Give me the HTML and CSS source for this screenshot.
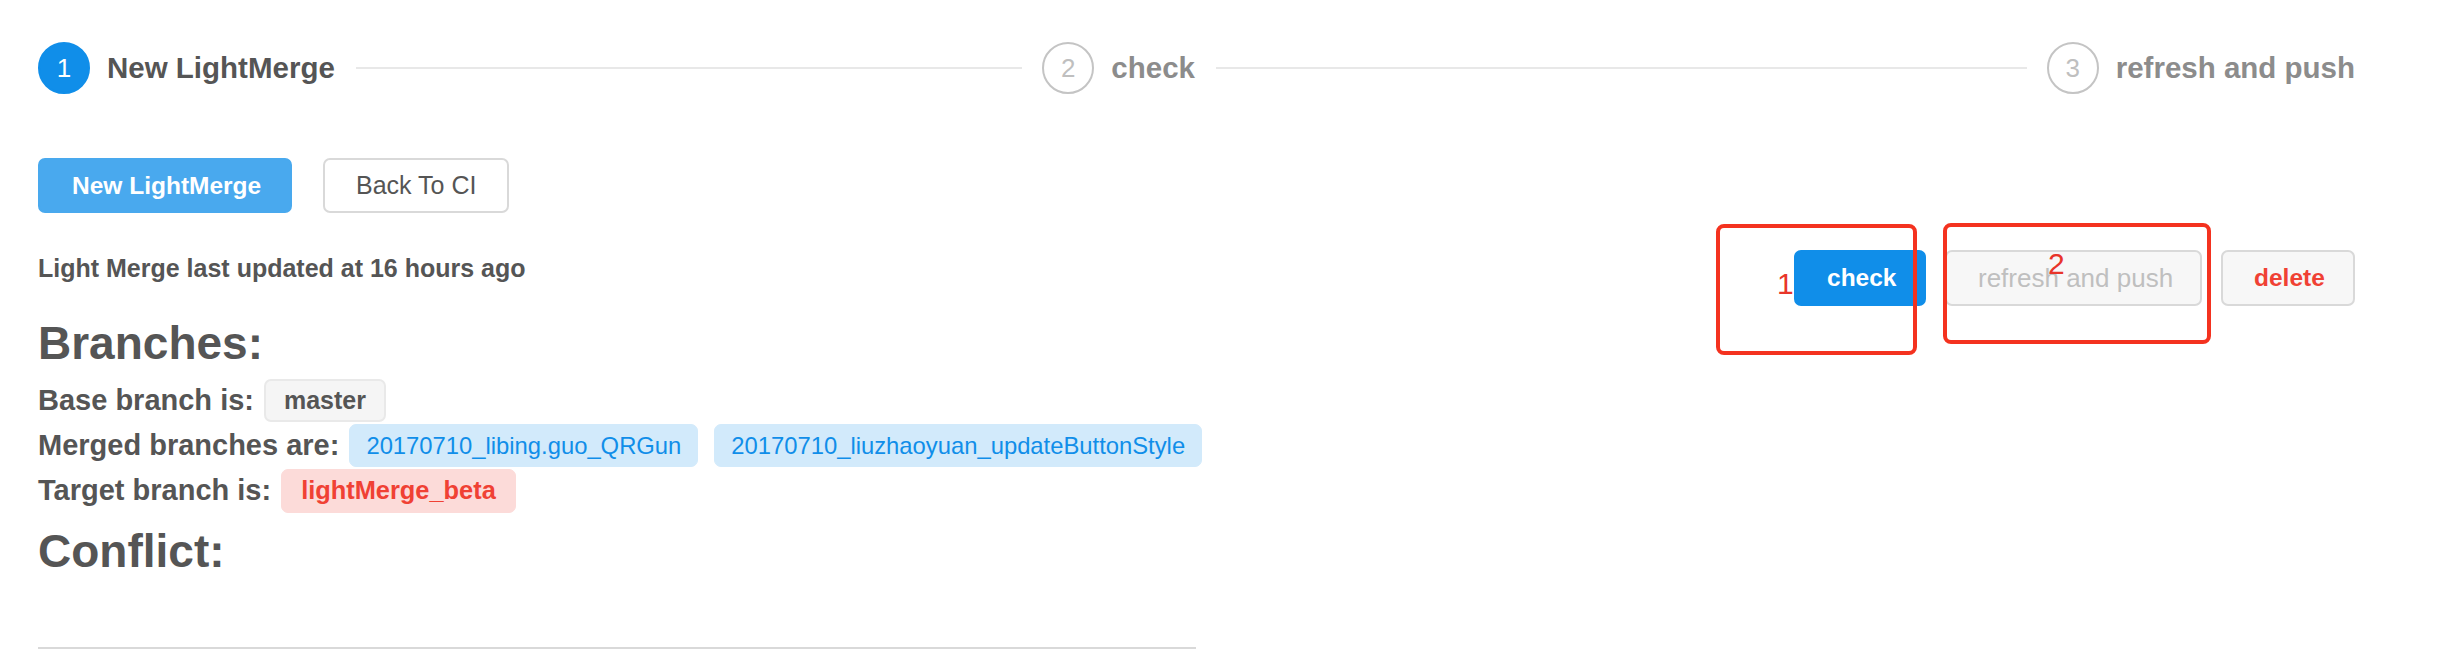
FILE: index.html
```html
<!DOCTYPE html>
<html>
<head>
<meta charset="utf-8">
<link rel="stylesheet" href="styles.css">
</head>
<body>
<div class="page">
  <div class="steps">
    <div class="step step-active">
      <span class="step-icon">1</span>
      <span class="step-title">New LightMerge</span>
      <span class="step-tail"></span>
    </div>
    <div class="step">
      <span class="step-icon">2</span>
      <span class="step-title">check</span>
      <span class="step-tail"></span>
    </div>
    <div class="step step-last">
      <span class="step-icon">3</span>
      <span class="step-title">refresh and push</span>
    </div>
  </div>

  <div class="toolbar">
    <button class="btn btn-primary-light">New LightMerge</button>
    <button class="btn btn-default">Back To CI</button>
  </div>

  <div class="info-row">
    <div class="info-col">
      <div class="updated">Light Merge last updated at 16 hours ago</div>
      <h2 class="heading">Branches:</h2>
      <div class="branch-row">
        <span class="label">Base branch is:</span>
        <span class="tag tag-gray">master</span>
      </div>
      <div class="branch-row">
        <span class="label">Merged branches are:</span>
        <span class="tag tag-blue">20170710_libing.guo_QRGun</span>
        <span class="tag tag-blue">20170710_liuzhaoyuan_updateButtonStyle</span>
      </div>
      <div class="branch-row">
        <span class="label">Target branch is:</span>
        <span class="tag tag-red">lightMerge_beta</span>
      </div>
      <h2 class="heading heading-conflict">Conflict:</h2>
      <div class="divider"></div>
    </div>
    <div class="actions">
      <button class="btn btn-primary">check</button>
      <button class="btn btn-disabled">refresh and push</button>
      <button class="btn btn-danger">delete</button>
    </div>
  </div>

  <div class="mark mark-1"></div>
  <div class="mark mark-2"></div>
  <span class="mark-num mark-num-1">1</span>
  <span class="mark-num mark-num-2">2</span>
</div>
</body>
</html>
```

FILE: styles.css
```css
* { box-sizing: border-box; }
html, body { margin: 0; padding: 0; background: #fff; }
body {
  font-family: "Liberation Sans", Arial, sans-serif;
  color: #595959;
}
.page {
  position: relative;
  width: 2438px;
  height: 664px;
  padding: 42px 83px 0 38px;
  overflow: hidden;
}

/* steps */
.steps { display: flex; align-items: center; height: 52px; }
.step { flex: 1; display: flex; align-items: center; min-width: 0; }
.step-last { flex: none; }
.step-icon {
  flex: none;
  width: 52px; height: 52px;
  border-radius: 50%;
  border: 2px solid #c4c4c4;
  color: #bfbfbf;
  font-size: 26px;
  line-height: 48px;
  text-align: center;
  margin-right: 17px;
}
.step-active .step-icon { background: #108ee9; border-color: #108ee9; color: #fff; }
.step-title {
  flex: none;
  font-size: 29.5px;
  font-weight: bold;
  color: #8c8c8c;
  line-height: 52px;
  white-space: nowrap;
}
.step-active .step-title { color: #555; }
.step-tail {
  flex: 1;
  height: 2px;
  background: #e8e8e8;
  margin: 0 20px 0 21px;
}

/* buttons */
.toolbar { display: flex; gap: 31px; margin-top: 64px; }
.btn {
  font-family: "Liberation Sans", Arial, sans-serif;
  font-size: 24.5px;
  font-weight: bold;
  height: 55px;
  padding: 0 31px;
  border-radius: 7px;
  border: 2px solid #d9d9d9;
  background: #fff;
  color: #555;
  line-height: 51px;
  white-space: nowrap;
}
.btn-primary-light { background: #49a9ee; border-color: #49a9ee; color: #fff; padding: 0 32px; width: 254px; }
.btn-default { width: 186px; font-weight: normal; font-size: 25px; }

/* info */
.info-row { display: flex; margin-top: 37px; align-items: flex-start; }
.info-col { width: 1158px; flex: none; }
.updated { font-size: 25px; font-weight: bold; line-height: 36px; color: #555; white-space: nowrap; }
.heading {
  margin: 30px 0 8px;
  font-size: 46px;
  font-weight: bold;
  line-height: 54px;
  color: #555;
}
.heading-conflict { margin: 11px 0 0; }
.branch-row { display: flex; align-items: center; height: 45px; gap: 10px; }
.label { flex: none; font-size: 29px; font-weight: bold; color: #555; white-space: nowrap; }
.tag {
  flex: none;
  height: 43px;
  line-height: 41px;
  border-radius: 7px;
  border: 1px solid transparent;
  padding: 0 18px;
  white-space: nowrap;
}
.tag-gray { background: #f5f5f5; border: 2px solid #e9e9e9; line-height: 39px; color: #555; font-weight: bold; font-size: 25px; }
.tag-blue { background: #d2eafb; border-color: #d2eafb; color: #108ee9; font-size: 23.8px; padding: 0 16px; margin-right: 6px; }
.tag-red { background: #fcdbd9; border-color: #fcdbd9; color: #f04134; font-weight: bold; font-size: 25.4px; padding: 0 19px; height: 44px; }
.divider { height: 2px; background: #d9d9d9; margin-top: 69px; }

.actions { flex: 1; display: flex; justify-content: flex-end; gap: 19px; }
.actions .btn { height: 56px; line-height: 52px; padding: 0 31px; background: #f7f7f7; }
.actions .btn-primary { background: #108ee9; border-color: #108ee9; color: #fff; width: 132px; }
.actions .btn-disabled { color: #bfbfbf; font-weight: normal; font-size: 26px; width: 257px; }
.actions .btn-danger { color: #f04134; width: 134px; }

/* annotations */
.mark {
  position: absolute;
  border: 4px solid #f4321f;
  border-radius: 8px;
}
.mark-1 { left: 1716px; top: 224px; width: 201px; height: 131px; }
.mark-2 { left: 1943px; top: 223px; width: 268px; height: 121px; }
.mark-num {
  position: absolute;
  color: #e8352a;
  font-size: 30px;
  line-height: 30px;
}
.mark-num-1 { left: 1777px; top: 269px; }
.mark-num-2 { left: 2048px; top: 249px; }
```
